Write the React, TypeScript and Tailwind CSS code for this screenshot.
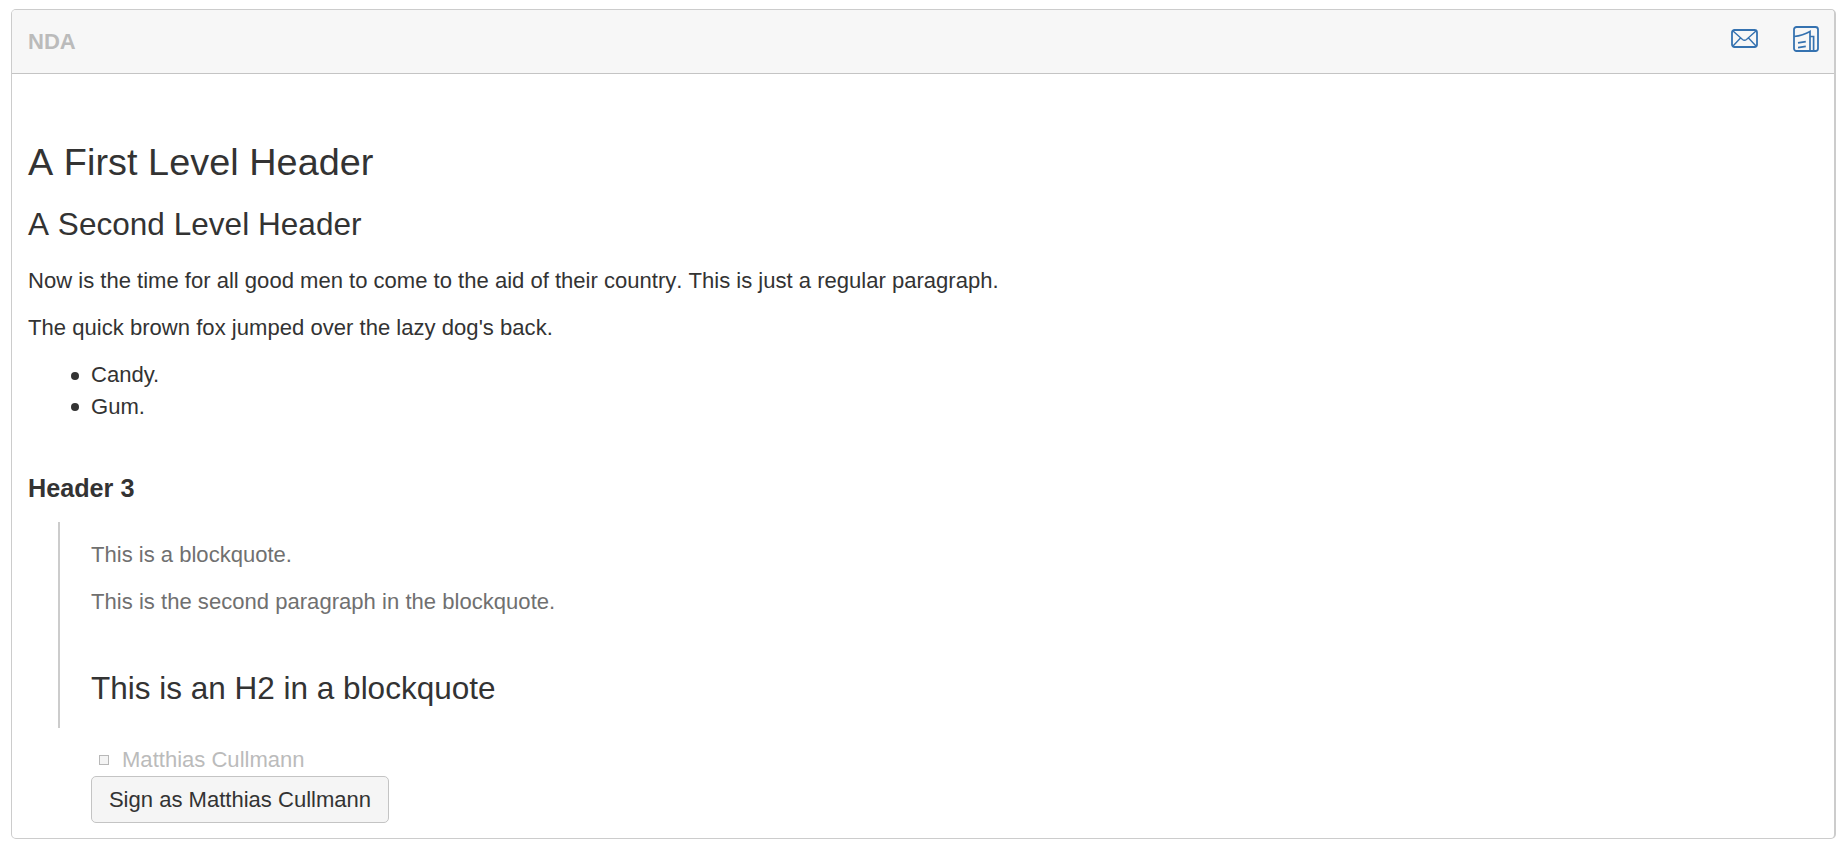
export default function App() {
  return (
    <div className="flex h-[847px] bg-white pt-[9px] pl-[11px] pr-[4px] font-['Liberation_Sans',Arial,sans-serif] text-[#333333] [font-kerning:none]">
      <section className="flex h-[830px] w-full flex-col overflow-hidden rounded-[5px] border border-r-2 border-[#cccccc]">
        <header className="flex h-[64px] shrink-0 items-start justify-between border-b border-[#c4c4c4] bg-[#f7f7f7] pl-4 pr-[15px]">
          <h1 className="mt-4 text-[22.05px] font-bold leading-8 text-[#bbbbbb]">NDA</h1>
          <div className="mt-4 flex items-start gap-[35px]">
            <svg className="mt-[3px] h-[19px] w-[27px]" viewBox="0 0 27 19" fill="none" stroke="#3572b0" strokeWidth="1.8">
              <rect x="1" y="1" width="25" height="17" rx="2.5" />
              <path d="M2 2 L11.5 10.5 Q13.5 12 15.5 10.5 L25 2 M2 17 L9.5 9 M25 17 L17.5 9" strokeWidth="1.4" />
            </svg>
            <svg className="h-[26px] w-[26px]" viewBox="0 0 26 26" fill="none" stroke="#3572b0" strokeWidth="1.8">
              <rect x="1" y="1" width="24" height="24" rx="2.5" />
              <path d="M1 10.5 Q10 9.5 17 5.5 V25 M17 10.5 H20.6 V25 M5 16.8 L12.8 15.6 M5 21.6 L12.8 20.4" strokeWidth="1.7" />
            </svg>
          </div>
        </header>
        <main className="flex flex-col items-start px-4 text-[22.05px] leading-8">
          <h1 className="mt-[64px] text-[37.8px] leading-[48px] tracking-[0.05px]">A First Level Header</h1>
          <h2 className="mt-[18px] text-[31.5px] leading-10 tracking-[0.04px]">A Second Level Header</h2>
          <p className="mt-[21px]">Now is the time for all good men to come to the aid of their country. This is just a regular paragraph.</p>
          <p className="mt-[15px] tracking-[0.02px]">The quick brown fox jumped over the lazy dog's back.</p>
          <ul className="mt-[15px] pl-[43px] leading-[31.5px] [font-kerning:normal]">
            <li className="flex items-center gap-3"><span className="size-2 rounded-full bg-[#333333] mt-0.5" />Candy.</li>
            <li className="flex items-center gap-3"><span className="size-2 rounded-full bg-[#333333] mt-0.5" />Gum.</li>
          </ul>
          <h3 className="mt-[50px] text-[25.2px] font-bold leading-8">Header 3</h3>
          <blockquote className="mt-[18px] ml-[30px] h-[206px] border-l-2 border-[#cccccc] pl-[31px] text-[#707070]">
            <p className="mt-[17px]">This is a blockquote.</p>
            <p className="mt-[15px] tracking-[0.02px]">This is the second paragraph in the blockquote.</p>
            <h2 className="mt-[50px] text-[31.5px] leading-10 text-[#333333]">This is an H2 in a blockquote</h2>
          </blockquote>
          <div className="ml-[71px] mt-4 flex items-center text-[#bbbbbb]">
            <span className="mr-[13px] size-[10px] border border-[#b8b8b8] bg-[#f4f4f4]" />
            Matthias Cullmann
          </div>
          <button className="ml-[63px] h-[47px] w-[298px] rounded-[5px] border border-[#c4c4c4] bg-[#f5f5f5]">Sign as Matthias Cullmann</button>
        </main>
      </section>
    </div>
  );
}
